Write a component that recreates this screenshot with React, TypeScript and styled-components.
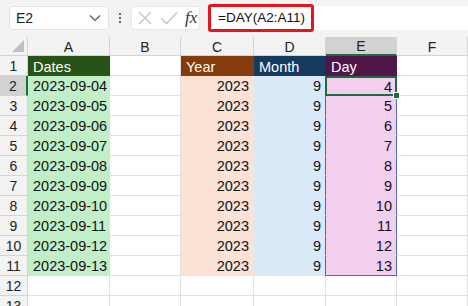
import React from 'react';
import styled, { createGlobalStyle } from 'styled-components';

const GlobalStyle = createGlobalStyle`
  html, body {
    margin: 0;
    padding: 0;
    background: #ffffff;
    overflow: hidden;
  }
  body {
    font-family: 'Liberation Sans', Arial, sans-serif;
  }
`;

type Fill = 'none' | 'green' | 'peach' | 'blue' | 'pink';

const fills: Record<Fill, string> = {
  none: '#ffffff',
  green: '#c1f0c8',
  peach: '#fbe2d5',
  blue: '#dae9f8',
  pink: '#f2ceef',
};

const COLUMNS = ['A', 'B', 'C', 'D', 'E', 'F'];

const dates = [
  '2023-09-04',
  '2023-09-05',
  '2023-09-06',
  '2023-09-07',
  '2023-09-08',
  '2023-09-09',
  '2023-09-10',
  '2023-09-11',
  '2023-09-12',
  '2023-09-13',
];

const ChevronDown = () => (
  <svg width="12" height="8" viewBox="0 0 12 8" fill="none">
    <path d="M1 1.5 L6 6.5 L11 1.5" stroke="#555" strokeWidth="1.2" />
  </svg>
);

const CrossIcon = () => (
  <svg width="16" height="16" viewBox="0 0 16 16" fill="none">
    <path d="M2 2 L14 14 M14 2 L2 14" stroke="#c4c4c4" strokeWidth="1.3" />
  </svg>
);

const CheckIcon = () => (
  <svg width="18" height="14" viewBox="0 0 18 14" fill="none">
    <path d="M1 7 L6.5 12.5 L17 1.5" stroke="#c4c4c4" strokeWidth="1.3" />
  </svg>
);

const App = (): JSX.Element => {
  const rows = Array.from({ length: 13 }, (_, i) => i + 1);

  return (
    <>
      <GlobalStyle />
      <Page>
        <Toolbar>
          <NameBox>
            <span>E2</span>
            <ChevronDown />
          </NameBox>
          <Dots>
            <i />
            <i />
            <i />
          </Dots>
          <FxBox>
            <CrossIcon />
            <CheckIcon />
            <Fx>fx</Fx>
          </FxBox>
          <FormulaBar>
            <FormulaText>=DAY(A2:A11)</FormulaText>
          </FormulaBar>
        </Toolbar>

        <Sheet>
          <Corner>
            <svg width="12" height="12" viewBox="0 0 12 12">
              <polygon points="12,0 12,12 0,12" fill="#bfbfbf" />
            </svg>
          </Corner>
          {COLUMNS.map((c) => (
            <ColHead key={c} $active={c === 'E'}>
              {c}
            </ColHead>
          ))}

          {rows.map((r) => {
            const i = r - 2;
            const data = r >= 2 && r <= 11;
            return (
              <React.Fragment key={r}>
                <RowHead $active={r === 2}>{r}</RowHead>
                {r === 1 ? (
                  <>
                    <HeadCell $bg="#275317">Dates</HeadCell>
                    <Cell />
                    <HeadCell $bg="#843c0c">Year</HeadCell>
                    <HeadCell $bg="#153b5e">Month</HeadCell>
                    <HeadCell $bg="#501549">Day</HeadCell>
                    <Cell />
                  </>
                ) : data ? (
                  <>
                    <Cell $fill="green">{dates[i]}</Cell>
                    <Cell />
                    <Cell $fill="peach" $right>
                      2023
                    </Cell>
                    <Cell $fill="blue" $right>
                      9
                    </Cell>
                    <RangeCell
                      $fill="pink"
                      $right
                      $first={r === 2}
                      $last={r === 11}
                      $active={r === 2}
                    >
                      {i + 4}
                    </RangeCell>
                    <Cell />
                  </>
                ) : (
                  <>
                    {COLUMNS.map((c) => (
                      <Cell key={c} />
                    ))}
                  </>
                )}
              </React.Fragment>
            );
          })}
        </Sheet>
      </Page>
    </>
  );
};

const Page = styled.div`
  width: 468px;
  height: 306px;
  overflow: hidden;
  background: #ffffff;
`;

const Toolbar = styled.div`
  display: flex;
  align-items: center;
  height: 37px;
  background: #f3f3f3;
  padding-left: 9px;
  box-sizing: border-box;
`;

const NameBox = styled.div`
  display: flex;
  align-items: center;
  justify-content: space-between;
  width: 100px;
  height: 24px;
  box-sizing: border-box;
  padding: 0 7px 0 6px;
  background: #ffffff;
  border: 1px solid #e3e3e3;
  border-radius: 4px;
  font-size: 14px;
  color: #222;
  margin-top: -2px;
`;

const Dots = styled.div`
  display: flex;
  flex-direction: column;
  gap: 2px;
  width: 22px;
  align-items: center;
  margin-top: -2px;

  i {
    width: 2px;
    height: 2px;
    background: #333;
    border-radius: 1px;
  }
`;

const FxBox = styled.div`
  display: flex;
  align-items: center;
  gap: 7px;
  width: 69px;
  height: 24px;
  box-sizing: border-box;
  padding-left: 5px;
  background: #ffffff;
  border: 1px solid #e8e8e8;
  border-radius: 4px;
  margin-top: -2px;
`;

const Fx = styled.span`
  font-family: 'Liberation Serif', 'Times New Roman', serif;
  font-style: italic;
  font-size: 17px;
  color: #333;
  margin-left: 0px;
`;

const FormulaBar = styled.div`
  flex: 1;
  margin-left: 8px;
  height: 24px;
  margin-top: -2px;
  background: #ffffff;
  display: flex;
  align-items: center;
  position: relative;
`;

const FormulaText = styled.div`
  position: relative;
  height: 28px;
  box-sizing: border-box;
  border: 3px solid #e8141c;
  border-radius: 3px;
  padding: 0 6px 0 7px;
  display: flex;
  align-items: center;
  font-size: 13.5px;
  color: #111;
  background: #ffffff;
`;

const Sheet = styled.div`
  display: grid;
  grid-template-columns: 28px 82px 71px 73px 72px 71px 71px;
  grid-template-rows: 19px repeat(13, 20px);
`;

const Corner = styled.div`
  background: #f3f3f3;
  border-right: 1px solid #d4d4d4;
  border-bottom: 1px solid #d4d4d4;
  display: flex;
  align-items: flex-end;
  justify-content: flex-end;
  padding: 0 3px 3px 0;
`;

const ColHead = styled.div<{ $active?: boolean }>`
  background: ${(p) => (p.$active ? '#d2d2d2' : '#f3f3f3')};
  border-right: 1px solid #d4d4d4;
  border-bottom: ${(p) => (p.$active ? '2px solid #1f6b40' : '1px solid #d4d4d4')};
  display: flex;
  align-items: center;
  justify-content: center;
  font-size: 14px;
  color: #222;
  box-sizing: border-box;
  padding-top: 1px;
`;

const RowHead = styled.div<{ $active?: boolean }>`
  background: ${(p) => (p.$active ? '#d2d2d2' : '#f3f3f3')};
  border-right: ${(p) => (p.$active ? '2px solid #1f6b40' : '1px solid #d4d4d4')};
  border-bottom: 1px solid #d4d4d4;
  display: flex;
  align-items: center;
  justify-content: center;
  font-size: 14px;
  color: #222;
  box-sizing: border-box;
`;

const Cell = styled.div<{ $fill?: Fill; $right?: boolean }>`
  background: ${(p) => fills[p.$fill ?? 'none']};
  border-right: 1px solid ${(p) => (p.$fill && p.$fill !== 'none' ? fills[p.$fill] : '#e1e1e1')};
  border-bottom: 1px solid ${(p) => (p.$fill && p.$fill !== 'none' ? fills[p.$fill] : '#e1e1e1')};
  box-sizing: border-box;
  display: flex;
  align-items: center;
  justify-content: ${(p) => (p.$right ? 'flex-end' : 'flex-start')};
  padding: 1px 4px 0 5px;
  font-size: 14.5px;
  color: #111;
  white-space: nowrap;
`;

const HeadCell = styled.div<{ $bg: string }>`
  background: ${(p) => p.$bg};
  color: #ffffff;
  box-sizing: border-box;
  display: flex;
  align-items: center;
  padding: 1px 4px 0 5px;
  font-size: 14.5px;
  white-space: nowrap;
`;

const RangeCell = styled(Cell)<{ $first?: boolean; $last?: boolean; $active?: boolean }>`
  position: relative;
  border-left: 1px solid #4a6bc0;
  border-right: 1px solid #4a6bc0;
  border-top: ${(p) => (p.$first ? '1px solid #4a6bc0' : 'none')};
  border-bottom: ${(p) => (p.$last ? '1px solid #4a6bc0' : `1px solid ${fills.pink}`)};
  margin-left: -1px;

  ${(p) =>
    p.$active &&
    `
    &::after {
      content: '';
      position: absolute;
      left: -1px;
      top: -1px;
      right: -1px;
      bottom: -1px;
      border: 2px solid #1f6b40;
    }
    &::before {
      content: '';
      position: absolute;
      right: -4px;
      bottom: -4px;
      width: 5px;
      height: 5px;
      background: #1f6b40;
      border: 1px solid #ffffff;
      z-index: 2;
    }
  `}
`;

export default App;
